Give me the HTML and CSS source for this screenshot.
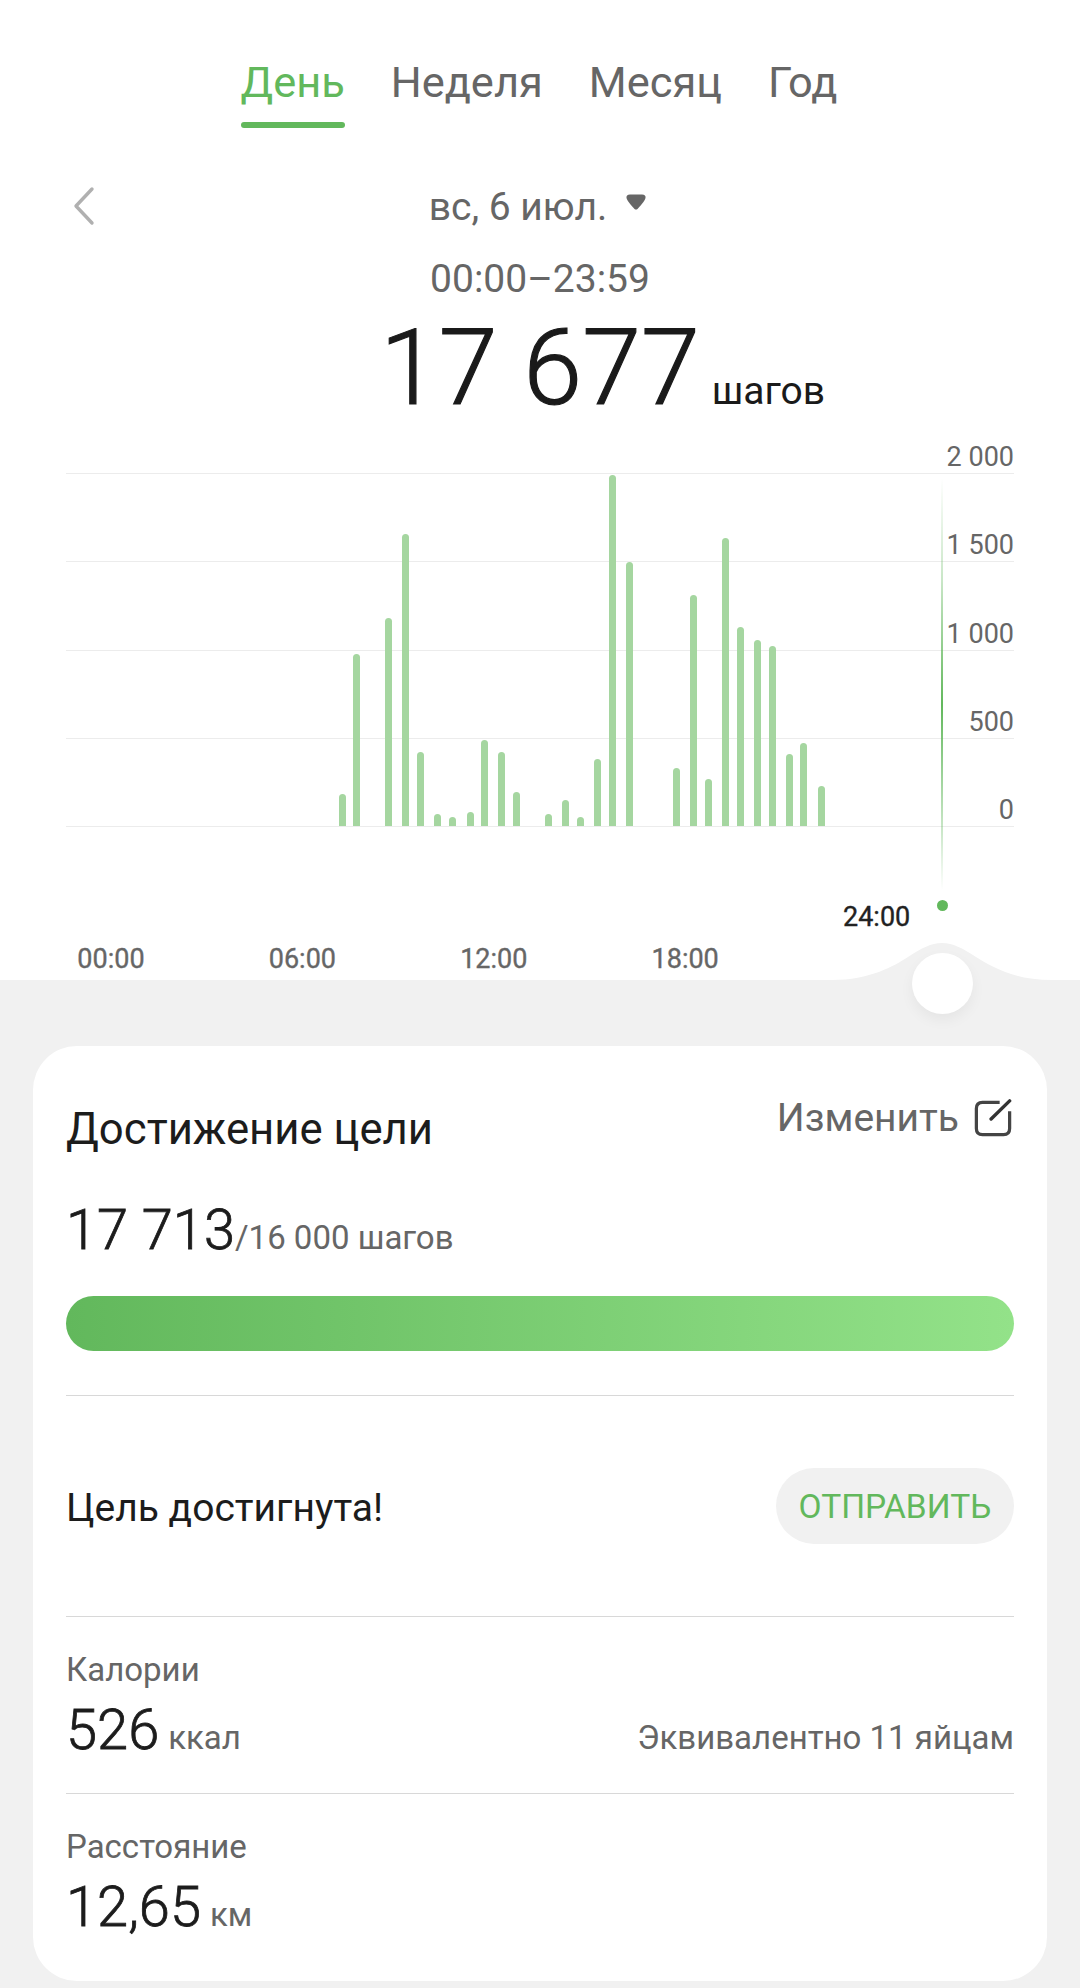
FILE: index.html
```html
<!DOCTYPE html>
<html lang="ru">
<head>
<meta charset="utf-8">
<title>Шаги</title>
<link rel="stylesheet" href="styles.css">
</head>
<body>
<section class="top">
  <nav class="tabs">
    <span class="tab active">День</span>
    <span class="tab">Неделя</span>
    <span class="tab">Месяц</span>
    <span class="tab">Год</span>
  </nav>
  <div class="date-row">
    <svg class="back" width="24" height="40" viewBox="0 0 24 40"><path d="M21 3 L5 20 L21 37" fill="none" stroke="#b0b0b0" stroke-width="3.4" stroke-linecap="round" stroke-linejoin="round"/></svg>
    <span class="date">вс, 6 июл.</span>
    <svg class="caret" width="20" height="16" viewBox="0 0 20 16"><path d="M4 0.5 H16 Q20 0.5 19.5 4 Q19 7 11.5 15 Q10 16 8.5 15 Q1 7 0.5 4 Q0 0.5 4 0.5 Z" fill="#666"/></svg>
  </div>
  <div class="range">00:00–23:59</div>
  <div class="total"><span class="total-num">17 677</span><span class="total-unit">шагов</span></div>
  <div class="chart">
    <div class="row first"><span>2 000</span></div>
    <div class="row"><span>1 500</span></div>
    <div class="row"><span>1 000</span></div>
    <div class="row"><span>500</span></div>
    <div class="row"><span>0</span></div>
    <div class="bars">
      <i style="left:272.6px;height:32px"></i>
      <i style="left:287.3px;height:172px"></i>
      <i style="left:319.4px;height:208.3px"></i>
      <i style="left:336.2px;height:291.7px"></i>
      <i style="left:351.2px;height:73.7px"></i>
      <i style="left:368.4px;height:12px"></i>
      <i style="left:383px;height:8.7px"></i>
      <i style="left:400.5px;height:14.3px"></i>
      <i style="left:414.8px;height:86.3px"></i>
      <i style="left:432.3px;height:74.3px"></i>
      <i style="left:446.9px;height:33.7px"></i>
      <i style="left:479.1px;height:12px"></i>
      <i style="left:495.9px;height:26px"></i>
      <i style="left:510.9px;height:8.7px"></i>
      <i style="left:528px;height:67px"></i>
      <i style="left:543px;height:351px"></i>
      <i style="left:559.8px;height:263.7px"></i>
      <i style="left:606.9px;height:57.7px"></i>
      <i style="left:623.7px;height:231px"></i>
      <i style="left:638.7px;height:47px"></i>
      <i style="left:655.9px;height:287.7px"></i>
      <i style="left:670.5px;height:199px"></i>
      <i style="left:687.6px;height:185.7px"></i>
      <i style="left:702.6px;height:179.7px"></i>
      <i style="left:719.8px;height:71.7px"></i>
      <i style="left:734.4px;height:82.7px"></i>
      <i style="left:751.6px;height:40px"></i>
    </div>
    <div class="cursor-line"></div>
    <div class="cursor-dot"></div>
    <div class="cursor-time">24:00</div>
  </div>
  <div class="axis">
    <span>00:00</span><span>06:00</span><span>12:00</span><span>18:00</span>
  </div>
  <svg class="bump" width="220" height="40" viewBox="0 0 220 40"><path d="M0 38 C38 38 62 24 76 15 C90 6 99 1 110 1 C121 1 130 6 144 15 C158 24 182 38 220 38 V40 H0 Z" fill="#f1f1f1"/></svg>
  <div class="knob"></div>
</section>
<main class="card">
  <div class="card-head">
    <h2 class="card-title">Достижение цели</h2>
    <div class="edit">
      <span>Изменить</span>
      <svg class="edit-icon" width="38" height="38" viewBox="0 0 40 40"><path d="M27 3.5 H9 Q2.5 3.5 2.5 10 V31 Q2.5 37.5 9 37.5 H31 Q37.5 37.5 37.5 31 V13" fill="none" stroke="#444" stroke-width="3.4"/><path d="M18 21 L37.5 2" fill="none" stroke="#333" stroke-width="3.6" stroke-linecap="round"/></svg>
    </div>
  </div>
  <div class="goal"><span class="goal-num">17 713</span><span class="goal-of">/16 000 шагов</span></div>
  <div class="progress"></div>
  <div class="reached">
    <span class="reached-text">Цель достигнута!</span>
    <button class="send" type="button">ОТПРАВИТЬ</button>
  </div>
  <div class="stat stat-cal">
    <div class="stat-label">Калории</div>
    <div class="stat-line">
      <div><span class="stat-num">526</span><span class="stat-unit">ккал</span></div>
      <span class="stat-note">Эквивалентно 11 яйцам</span>
    </div>
  </div>
  <div class="stat stat-dist">
    <div class="stat-label">Расстояние</div>
    <div class="stat-line">
      <div><span class="stat-num">12,65</span><span class="stat-unit">км</span></div>
    </div>
  </div>
</main>
</body>
</html>
```
FILE: styles.css
```css
* { box-sizing: border-box; }
html, body { margin: 0; padding: 0; }
body {
  width: 1080px;
  height: 1988px;
  overflow: hidden;
  background: #f1f1f1;
  font-family: Roboto, "Noto Sans", sans-serif;
  color: #1c1c1c;
}
.top {
  position: relative;
  height: 980px;
  background: #fff;
  padding-top: 54px;
}
.tabs { display: flex; justify-content: center; gap: 46px; height: 74px; padding-right: 2px; }
.tab {
  position: relative;
  font-size: 43.4px;
  line-height: 58px;
  color: #666;
}
.tab.active { color: #62b85c; }
.tab.active::after {
  content: "";
  position: absolute;
  left: 0; right: 0;
  top: 68px;
  height: 6px;
  border-radius: 3px;
  background: #62b85c;
}
.date-row {
  position: relative;
  margin-top: 57px;
  height: 44px;
  display: flex;
  justify-content: center;
  align-items: center;
  gap: 19px;
  padding-right: 5px;
}
.back { position: absolute; left: 71px; top: 1px; }
.date { font-size: 39px; line-height: 44px; color: #666; }
.caret { margin-top: -10px; }
.range { margin-top: 28px; text-align: center; font-size: 39px; line-height: 44px; color: #666; }
.total {
  display: flex;
  justify-content: center;
  align-items: baseline;
  gap: 12px;
  margin-top: 15px;
  padding-left: 125px;
  height: 104px;
  line-height: 104px;
}
.total-num { font-size: 106px; font-weight: 300; -webkit-text-stroke: 1.2px #1a1a1a; color: #1a1a1a; }
.total-unit { font-size: 39px; color: #1a1a1a; }
.chart {
  position: relative;
  margin: 21px 66px 0;
  height: 387px;
}
.row {
  height: 88.25px;
  border-bottom: 1px solid #ececec;
  display: flex;
  justify-content: flex-end;
  align-items: flex-end;
  font-size: 27px;
  line-height: 32px;
  color: #666;
}
.row.first { height: 33px; }
.bars { position: absolute; left: 0; right: 0; bottom: 2px; height: 360px; }
.bars i {
  position: absolute;
  bottom: 0;
  width: 7px;
  background: #a5d6a0;
  border-radius: 3.5px 3.5px 0 0;
}
.cursor-line {
  position: absolute;
  left: 875px;
  top: 37px;
  width: 2px;
  height: 412px;
  background: linear-gradient(to bottom, rgba(98,184,92,0) 0%, rgba(98,184,92,.35) 25%, #62b85c 55%, rgba(98,184,92,.35) 85%, rgba(98,184,92,0) 100%);
}
.cursor-dot {
  position: absolute;
  left: 871px;
  top: 459px;
  width: 11px;
  height: 11px;
  border-radius: 50%;
  background: #62b85c;
}
.cursor-time {
  position: absolute;
  left: 777px;
  top: 460px;
  font-size: 27px;
  line-height: 32px;
  color: #222;
  -webkit-text-stroke: 0.35px #222;
}
.axis {
  display: grid;
  grid-template-columns: repeat(4, 191.4px);
  margin: 115px 0 0 15.3px;
  font-size: 27px;
  line-height: 32px;
  color: #666;
  -webkit-text-stroke: 0.35px #666;
  text-align: center;
}
.bump { position: absolute; left: 832px; top: 942px; }
.knob {
  position: absolute;
  left: 912px;
  top: 953px;
  width: 61px;
  height: 61px;
  border-radius: 50%;
  background: #fff;
  box-shadow: 0 6px 14px rgba(0,0,0,.05);
}
.card {
  margin: 66px 33px 0;
  height: 935px;
  padding: 0 33px;
  background: #fff;
  border-radius: 44px;
}
.card-head { display: flex; justify-content: space-between; align-items: flex-start; padding-top: 55px; }
.card-title { margin: 0; font-size: 43.7px; line-height: 56px; font-weight: 400; color: #1c1c1c; }
.edit { display: flex; align-items: center; gap: 15px; margin-top: -11px; padding-right: 2px; font-size: 39px; line-height: 56px; color: #666; }
.goal { margin-top: 41px; line-height: 64px; height: 64px; }
.goal-num { font-size: 56px; font-weight: 300; -webkit-text-stroke: 0.8px #1c1c1c; color: #1c1c1c; }
.goal-of { font-size: 33px; color: #666; }
.progress {
  margin-top: 34px;
  height: 55px;
  border-radius: 28px;
  background: linear-gradient(to right, #62b85c, #93e289);
}
.reached {
  margin-top: 44px;
  height: 222px;
  border-top: 1px solid #d8d8d8;
  border-bottom: 1px solid #d8d8d8;
  display: flex;
  justify-content: space-between;
  align-items: center;
}
.reached-text { font-size: 39px; padding-top: 3px; color: #1c1c1c; }
.send {
  width: 238px;
  height: 76px;
  border: 0;
  border-radius: 38px;
  background: #f1f1f1;
  color: #62b85c;
  font-family: inherit;
  font-size: 33.5px;
  padding: 0;
}
.stat { padding-top: 33px; }
.stat-cal { height: 177px; border-bottom: 1px solid #d8d8d8; }
.stat-label { font-size: 33px; line-height: 40px; color: #666; }
.stat-line { display: flex; justify-content: space-between; align-items: baseline; margin-top: 8px; line-height: 64px; }
.stat-num { font-size: 56px; font-weight: 300; -webkit-text-stroke: 0.8px #1c1c1c; color: #1c1c1c; }
.stat-unit { font-size: 33px; color: #666; margin-left: 9px; }
.stat-note { font-size: 33px; color: #666; }
```
